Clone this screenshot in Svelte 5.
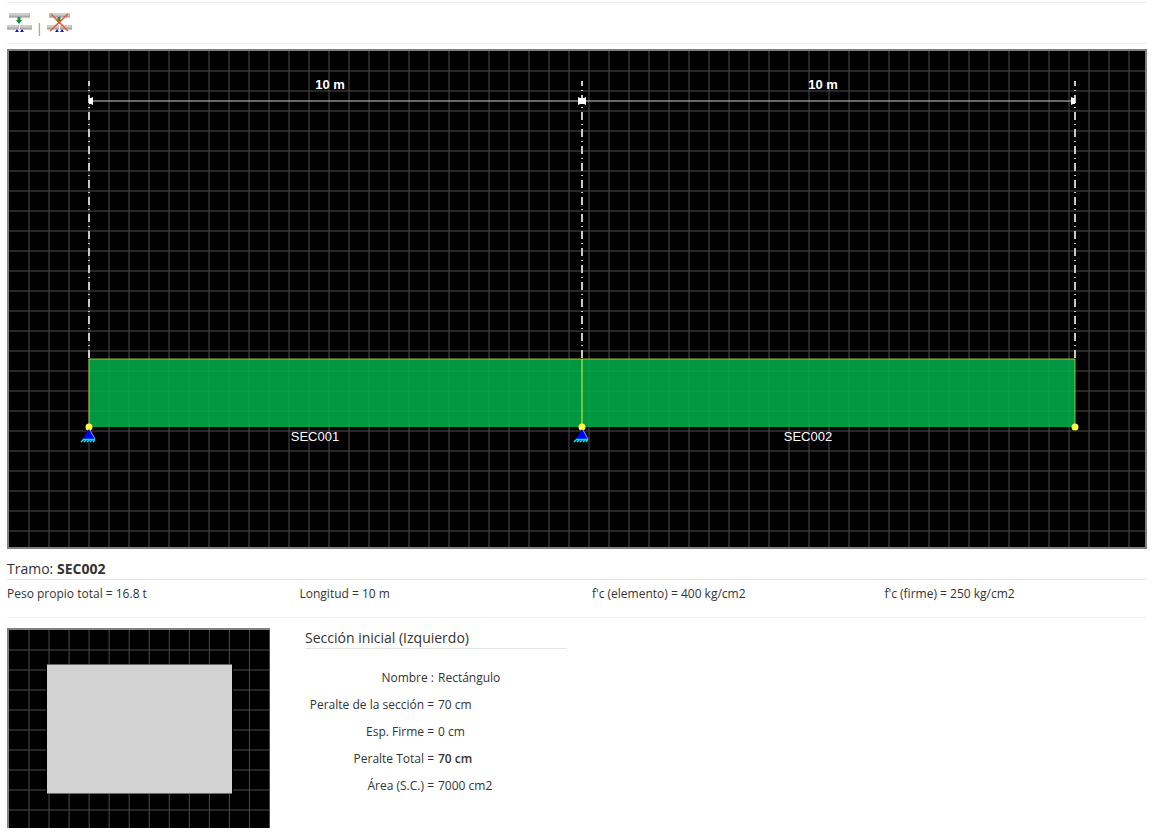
<script>
  const span = {
    name: 'SEC002',
    facts: [
      'Peso propio total = 16.8 t',
      'Longitud = 10 m',
      "f'c (elemento) = 400 kg/cm2",
      "f'c (firme) = 250 kg/cm2"
    ]
  };

  const section = [
    { label: 'Nombre :', value: 'Rectángulo' },
    { label: 'Peralte de la sección =', value: '70 cm' },
    { label: 'Esp. Firme =', value: '0 cm' },
    { label: 'Peralte Total =', value: '70 cm', strong: true },
    { label: 'Área (S.C.) =', value: '7000 cm2' }
  ];

  // Beam drawing, in canvas units
  const beams = [
    { name: 'SEC001', length: '10 m', x: 80, width: 493 },
    { name: 'SEC002', length: '10 m', x: 573, width: 493 }
  ];
  const axes = [80, 573, 1066];
  const supports = [80, 573];
  const beamTop = 308;
  const beamBottom = 376;

  const gridX = Array.from({ length: 56 }, (_, i) => (i + 1) * 20);
  const gridY = Array.from({ length: 24 }, (_, i) => (i + 1) * 20);
  const smallX = Array.from({ length: 13 }, (_, i) => 20 + i * 20.04);
  const smallY = Array.from({ length: 9 }, (_, i) => (i + 1) * 20);
</script>

{#snippet beamIcon()}
  <rect x="2" y="0" width="21" height="4" fill="#bdbdbd" />
  <path d="M2 1H22" stroke="#dedede" />
  <path d="M2 4H23" stroke="#929292" />
  <path d="M12 4V8" stroke="#159a3c" stroke-width="3" />
  <path d="M9 7H15L12 11Z" fill="#0f8a34" />
  <rect x="0" y="12" width="12" height="4" fill="#bdbdbd" />
  <rect x="13" y="12" width="12" height="4" fill="#bdbdbd" />
  <path d="M0 13H11M13 13H24" stroke="#dedede" />
  <path d="M0 16H12M13 16H25" stroke="#929292" />
  <path d="M10 16L12 19H8ZM15 16L17 19H13Z" fill="#1414e6" />
{/snippet}

<div class="page">
  <div class="toolbar">
    <button type="button" title="Agregar apoyo" aria-label="Agregar apoyo">
      <svg width="25" height="19" viewBox="0 0 25 19">{@render beamIcon()}</svg>
    </button>
    <span class="separator">|</span>
    <button type="button" title="Eliminar apoyo" aria-label="Eliminar apoyo">
      <svg width="25" height="19" viewBox="0 0 25 19">
        {@render beamIcon()}
        <path d="M4 1L21 18M21 1L3 18" stroke="#f2502e" stroke-width="1.5" />
      </svg>
    </button>
  </div>

  <div class="canvas">
    <svg viewBox="0 0 1136 496">
      {#each gridX as x}
        <line class="grid" x1={x} x2={x} y1="0" y2="496" />
      {/each}
      {#each gridY as y}
        <line class="grid" x1="0" x2="1136" y1={y} y2={y} />
      {/each}

      {#each axes as x}
        <line class="axis" x1={x} x2={x} y1={beamTop - 1} y2="30" />
      {/each}

      {#each beams as beam}
        <rect class="beam" x={beam.x} y={beamTop} width={beam.width} height={beamBottom - beamTop} />
      {/each}

      {#each beams as beam}
        {@const end = beam.x + beam.width}
        <path class="outline" d="M{beam.x} {beamBottom}V{beamTop}H{end}V{beamBottom}" />
        <line class="dimension" x1={beam.x} x2={end} y1="50" y2="50" />
        <path class="arrow" d="M{beam.x} 47H{beam.x + 2}L{beam.x + 4} 46V54L{beam.x + 2} 53H{beam.x}Z" />
        <path class="arrow" d="M{end} 47H{end - 2}L{end - 4} 46V54L{end - 2} 53H{end}Z" />
        <text class="length" x={beam.x + 241} y="38">{beam.length}</text>
        <text x={beam.x + 226} y="390">{beam.name}</text>
      {/each}

      {#each axes as x}
        <circle cx={x} cy={beamBottom} r="3.5" fill="#ffff40" />
      {/each}
      {#each supports as x}
        <g transform="translate({x} {beamBottom})">
          <path d="M0 2L6 12H-6Z" fill="#0000ff" />
          <path d="M1 3L6 12" stroke="#7f9fe0" />
          <path
            d="M-6 12.5H6M-5 12L-8 15M-2 12L-5 15M1 12L-2 15M4 12L1 15M6 12L4 15"
            stroke="#00e4f0"
            stroke-width="1.5"
          />
        </g>
      {/each}
    </svg>
  </div>

  <h4>Tramo: <strong>{span.name}</strong></h4>
  <div class="facts">
    {#each span.facts as fact}
      <div>{fact}</div>
    {/each}
  </div>

  <div class="details">
    <div class="preview">
      <svg viewBox="0 0 261 198">
        {#each smallX as x}
          <line class="grid" x1={x} x2={x} y1="0" y2="198" />
        {/each}
        {#each smallY as y}
          <line class="grid" x1="0" x2="261" y1={y} y2={y} />
        {/each}
        <rect x="37" y="34" width="187" height="130" fill="#000" />
        <rect x="38" y="34.5" width="185" height="129" fill="#d2d2d2" />
      </svg>
    </div>

    <div class="section">
      <h4>Sección inicial (Izquierdo)</h4>
      <dl>
        {#each section as row}
          <dt>{row.label}</dt>
          <dd class:strong={row.strong}>{row.value}</dd>
        {/each}
      </dl>
    </div>
  </div>
</div>

<style>
  :global(body) {
    margin: 0;
    background: #fff;
  }

  .page {
    padding: 2px 12px 10px 7px;
    font-family: 'Open Sans', sans-serif;
    font-size: 12px;
    line-height: 18px;
    color: #333;
  }

  .toolbar {
    display: flex;
    gap: 4px;
    height: 40px;
    border-top: 1px solid #eee;
    border-bottom: 1px solid #eee;
    margin-bottom: 5px;
  }

  .toolbar button {
    width: 25px;
    height: 19px;
    margin-top: 10px;
    padding: 0;
    border: none;
    background: transparent;
    cursor: pointer;
  }

  .separator {
    width: 7px;
    padding-top: 17px;
    color: #4a8fa8;
  }

  svg {
    display: block;
  }

  .canvas {
    border: 2px solid #808080;
    background: #000;
  }

  .canvas svg,
  .preview svg {
    width: 100%;
    height: auto;
  }

  .grid {
    stroke: #4c4c4c;
    stroke-width: 1;
  }

  .axis {
    stroke: #c8c8c8;
    stroke-width: 2;
    stroke-dasharray: 8 4 1 4;
  }

  .beam {
    fill: #00b24c;
    fill-opacity: 0.85;
  }

  .outline {
    fill: none;
    stroke: #b4e632;
    stroke-opacity: 0.8;
  }

  .dimension {
    stroke: #ccc;
  }

  .arrow {
    fill: #fff;
  }

  text {
    fill: #fff;
    font-family: 'Liberation Sans', Arial, sans-serif;
    font-size: 13px;
    text-anchor: middle;
  }

  .length {
    font-weight: bold;
  }

  h4 {
    margin: 0;
    border-bottom: 1px solid #e5e5e5;
    font-size: 14px;
    font-weight: normal;
    line-height: 20px;
  }

  h4 strong {
    font-weight: bold;
  }

  .canvas + h4 {
    margin-top: 10px;
  }

  .facts {
    display: grid;
    grid-template-columns: repeat(4, 1fr);
    gap: 30px;
    padding: 5px 0 14px;
    border-bottom: 1px solid #eee;
  }

  .details {
    display: flex;
    gap: 35px;
    margin-top: 10px;
  }

  .preview {
    box-sizing: border-box;
    width: 263px;
    border-top: 2px solid #808080;
    border-left: 2px solid #808080;
    background: #000;
  }

  .section {
    width: 23%;
  }

  dl {
    display: grid;
    grid-template-columns: 129px 1fr;
    gap: 9px 4px;
    margin: 20px 0 0;
  }

  dt {
    text-align: right;
    white-space: nowrap;
  }

  dd {
    margin: 0;
  }

  .strong {
    font-weight: 600;
  }
</style>
